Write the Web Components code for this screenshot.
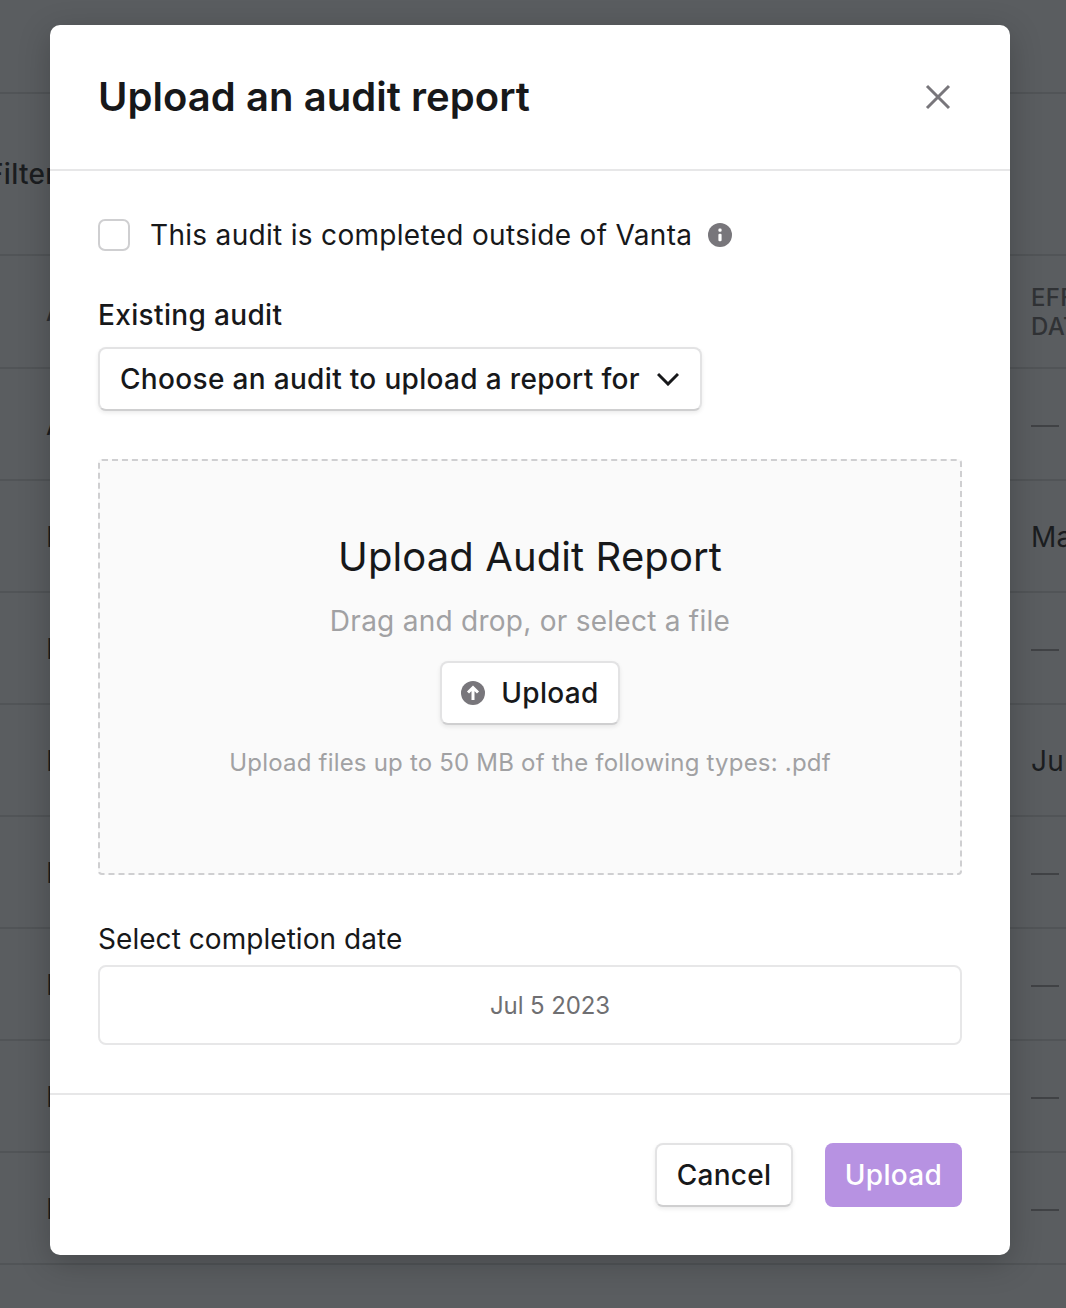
<!DOCTYPE html>
<html><head><meta charset="utf-8"><style>
html,body{margin:0;padding:0;background:#5a5d60;}
body{width:1066px;height:1308px;overflow:hidden;position:relative;font-family:Inter,"Liberation Sans",sans-serif;}
</style></head><body>
<template id="bg-row-t"><style>
:host{display:flex;justify-content:space-between;align-items:center;box-sizing:border-box;height:var(--h,112px);border-bottom:2px solid #515457;overflow:hidden;white-space:nowrap;font-size:28px;letter-spacing:.3px;color:#1b1d20;padding:2px 0 0 46px}
.r{width:35px;overflow:hidden;line-height:30px;flex:none}
</style><slot name="l"></slot><div class="r"><slot></slot></div></template>

<template id="bg-table-t"><style>:host{display:block}</style><slot></slot></template>

<template id="bg-dash-t"><style>:host{display:block;width:28px;height:2px;background:#404245;margin-top:2px}</style></template>

<template id="modal-t"><style>
:host{display:flex;flex-direction:column;position:absolute;left:50px;top:25px;width:960px;height:1230px;background:#fff;border-radius:10px;box-shadow:0 8px 32px rgba(0,0,0,.22);color:#17181a;overflow:hidden}
header{box-sizing:border-box;height:146px;flex:none;display:flex;align-items:center;justify-content:space-between;padding:0 58px 0 48px;border-bottom:2px solid #e7e7e8}
h1{margin:0;font-size:40px;font-weight:600;line-height:52px;letter-spacing:.05px}
svg{display:block}
main{flex:1;padding:0 48px;display:flex;flex-direction:column;min-height:0}
footer{box-sizing:border-box;height:162px;flex:none;border-top:2px solid #e7e7e8;display:flex;justify-content:flex-end;align-items:flex-start;gap:32px;padding:48px 48px 0}
</style><header><h1>Upload an audit report</h1>
<svg width="28" height="28" viewBox="0 0 28 28" fill="none" stroke="#78767b" stroke-width="3"><path d="M3 3 L25 25 M25 3 L3 25"/></svg></header>
<main><slot></slot></main><footer><slot name="foot"></slot></footer></template>

<template id="check-t"><style>
:host{display:flex;align-items:center;height:40px;margin-top:44px;font-size:28px;letter-spacing:.31px;line-height:40px}
.b{box-sizing:border-box;width:32px;height:32px;border:2px solid #cfcfd1;border-radius:7px;margin-right:20px;flex:none}
svg{margin-left:16px;display:block}
</style><span class="b"></span><span><slot></slot></span>
<svg width="24" height="24" viewBox="0 0 24 24"><circle cx="12" cy="12" r="12" fill="#78767b"/><rect x="10.4" y="5.5" width="3.2" height="3.2" rx="1.2" fill="#fff"/><rect x="10.4" y="10.8" width="3.2" height="7.5" rx="1.2" fill="#fff"/></svg></template>

<template id="field-t"><style>
:host{display:block;font-size:28px;line-height:40px;font-weight:500;letter-spacing:.35px}
label{display:block;height:40px}
</style><label><slot name="label"></slot></label><slot></slot></template>

<template id="btn-t"><style>
:host{display:inline-flex;align-items:center;justify-content:center;box-sizing:border-box;height:64px;padding:0 20px;border:2px solid #e3e3e4;border-bottom-color:#cfcfd0;border-radius:8px;background:#fff;box-shadow:0 2px 4px rgba(0,0,0,.08);font-size:28px;font-weight:500;letter-spacing:.33px;color:#17181a;white-space:nowrap;flex:none}
:host([primary]){border:none;background:#b792e2;color:#fff;box-shadow:none;padding:0}
::slotted(svg){display:block}
</style><slot></slot></template>

<template id="drop-t"><style>
:host{display:flex;flex-direction:column;align-items:center;box-sizing:border-box;height:416px;margin-top:48px;background:#fafafa;border:2px dashed #cfcfd1;border-radius:4px;padding-top:70px;text-align:center}
h2{margin:0;font-size:40px;font-weight:400;line-height:52px;letter-spacing:.1px;color:#17181a}
p{margin:0;font-size:28px;line-height:40px;letter-spacing:.26px;color:#a1a1a3;margin-top:18px;margin-bottom:20px}
small{display:block;font-size:24px;line-height:36px;letter-spacing:.2px;color:#a1a1a3;margin-top:20px}
</style><h2><slot name="title"></slot></h2><p><slot name="hint"></slot></p><slot></slot><small><slot name="note"></slot></small></template>

<template id="date-t"><style>
:host{display:block;box-sizing:border-box;height:80px;border:2px solid #e7e7e8;border-radius:8px;font-size:24px;font-weight:400;line-height:78px;letter-spacing:-.1px;color:#6f6f72;text-align:center;padding-left:40px}
</style><slot></slot></template>

<bg-table>
<bg-row style="--h:94px"></bg-row>
<bg-row style="--h:162px"><span slot="l" style="margin:-2px 0 0 -59px;font-weight:500">Filter</span></bg-row>
<bg-row style="--h:113px"><span slot="l" style="font-size:24px;color:#2b2d30;font-weight:500">A</span><span style="display:block;font-size:24px;line-height:29px;margin-top:-2px;color:#303235;font-weight:500">EFF<br>DAT</span></bg-row>
<bg-row><span slot="l">A</span><bg-dash></bg-dash></bg-row>
<bg-row><span slot="l">H</span>Ma</bg-row>
<bg-row><span slot="l">H</span><bg-dash></bg-dash></bg-row>
<bg-row><span slot="l">H</span>Jun</bg-row>
<bg-row><span slot="l">H</span><bg-dash></bg-dash></bg-row>
<bg-row><span slot="l">H</span><bg-dash></bg-dash></bg-row>
<bg-row><span slot="l">H</span><bg-dash></bg-dash></bg-row>
<bg-row><span slot="l">H</span><bg-dash></bg-dash></bg-row>
</bg-table>

<upload-modal>
<check-row>This audit is completed outside of Vanta</check-row>
<form-field style="margin-top:40px"><span slot="label">Existing audit</span>
<ui-btn style="width:604px;justify-content:space-between;margin-top:12px">Choose an audit to upload a report for<svg width="22" height="14" viewBox="0 0 22 14" fill="none" stroke="#17181a" stroke-width="3" style="margin-right:1px"><path d="M1 2 L11 12 L21 2"/></svg></ui-btn></form-field>
<drop-zone><span slot="title">Upload Audit Report</span><span slot="hint">Drag and drop, or select a file</span>
<ui-btn style="width:180px;padding:0"><svg width="24" height="24" viewBox="0 0 24 24" style="margin-right:16px"><circle cx="12" cy="12" r="12" fill="#78767b"/><path d="M12 19V7M7 11.5L12 6.5L17 11.5" fill="none" stroke="#fff" stroke-width="3"/></svg>Upload</ui-btn>
<span slot="note">Upload files up to 50 MB of the following types: .pdf</span></drop-zone>
<form-field style="margin-top:44px;font-weight:400;letter-spacing:.05px"><span slot="label">Select completion date</span><date-box style="margin-top:6px">Jul 5 2023</date-box></form-field>
<ui-btn slot="foot" style="width:138px;padding:0;letter-spacing:.28px">Cancel</ui-btn><ui-btn slot="foot" primary style="width:137px">Upload</ui-btn>
</upload-modal>
<script>
function def(name,tid){customElements.define(name,class extends HTMLElement{constructor(){super();this.attachShadow({mode:'open'}).appendChild(document.getElementById(tid).content.cloneNode(true));}});}
def('bg-table','bg-table-t');def('bg-row','bg-row-t');def('bg-dash','bg-dash-t');def('upload-modal','modal-t');def('check-row','check-t');def('form-field','field-t');def('ui-btn','btn-t');def('drop-zone','drop-t');def('date-box','date-t');
</script>
</body></html>
